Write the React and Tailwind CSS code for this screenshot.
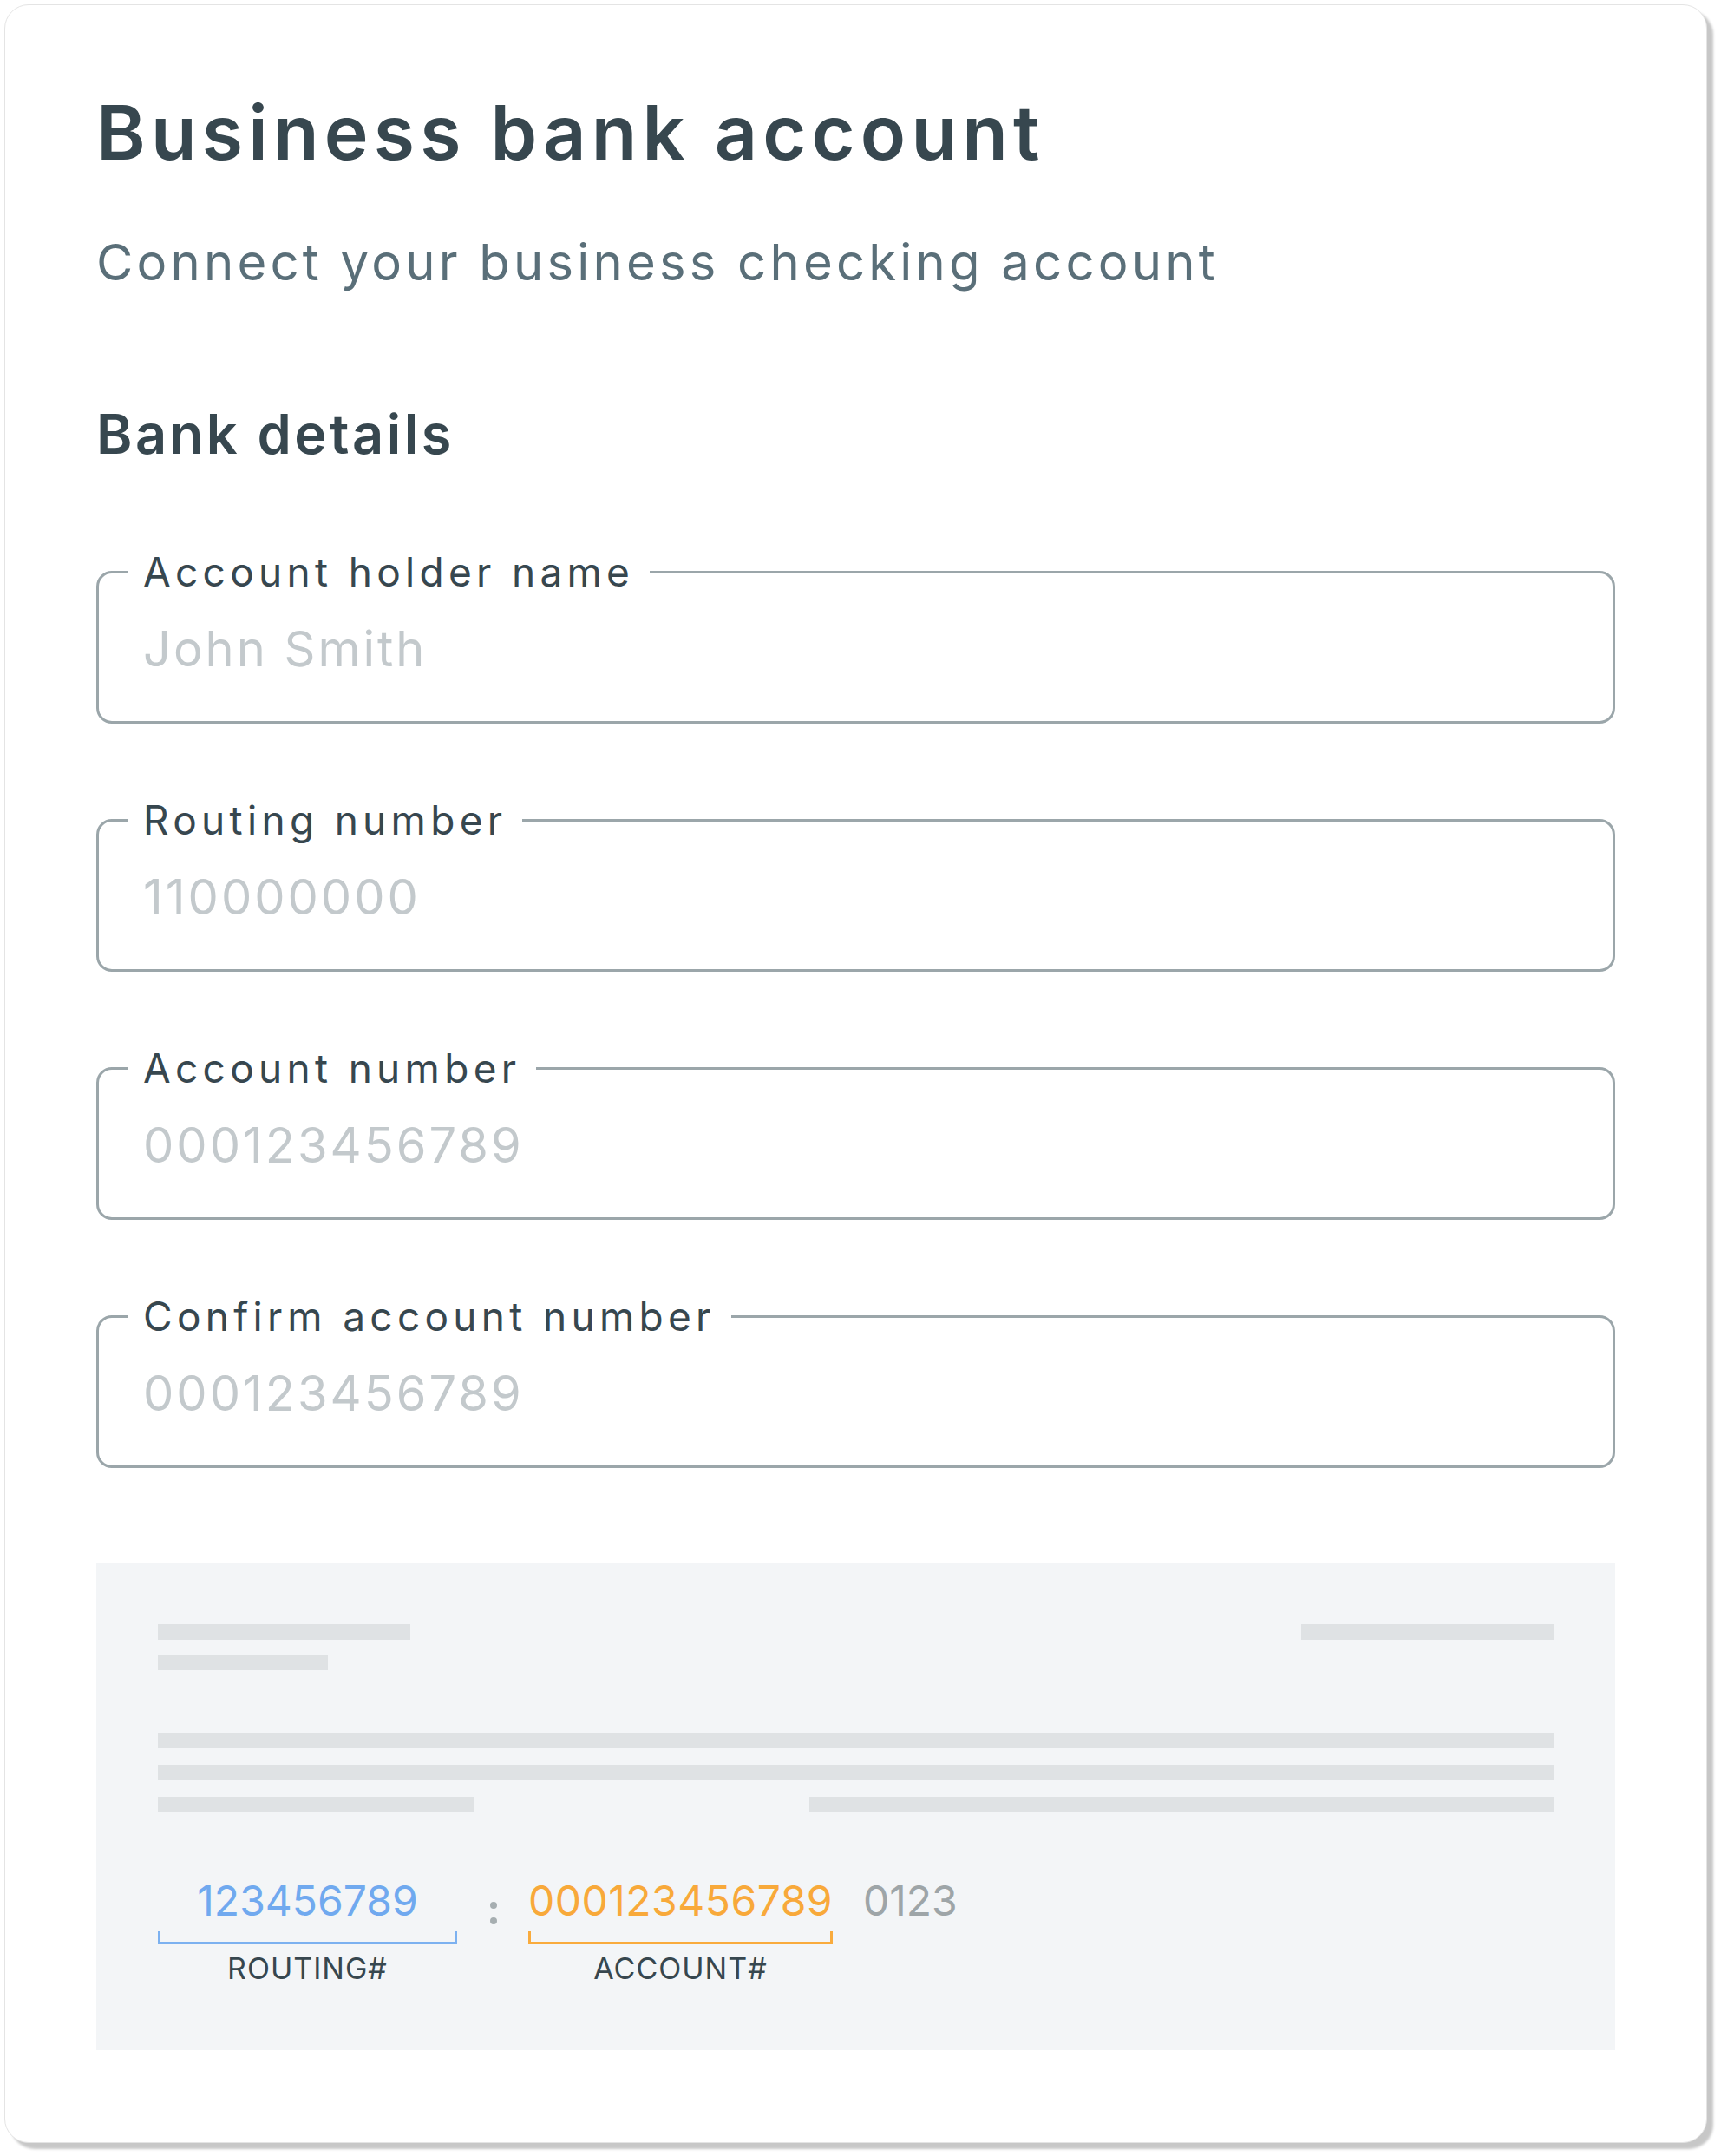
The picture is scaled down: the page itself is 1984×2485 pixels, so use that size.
import React from "react";

const font = { fontFamily: "Inter, 'Noto Sans', sans-serif" };

function Field({ label, placeholder }) {
  return (
    <div className="relative h-[176px] rounded-[18px] border-[3px] border-[#9ba6aa]">
      <span className="absolute left-[33px] top-[-2px] -translate-y-1/2 whitespace-nowrap bg-white px-[18px] text-[46px] leading-none tracking-[5.3px] text-[#37474f]">
        {label}
      </span>
      <input
        readOnly
        placeholder={placeholder}
        className="absolute left-[51px] right-[20px] top-[53px] bg-transparent text-[56px] leading-none tracking-[3px] text-[#37474f] outline-none placeholder:text-[#c3c9cc]"
        style={font}
      />
    </div>
  );
}

function Bar({ className }) {
  return <div className={`h-[18px] bg-[#dfe2e4] ${className}`} />;
}

export default function App() {
  return (
    <div className="min-h-screen bg-white p-[5px]" style={font}>
      <div className="w-[1963px] rounded-[28px] border border-[#e4e4e4] bg-white px-[105px] pb-[106px] pt-[104px] shadow-[7px_7px_3px_rgba(0,0,0,0.22)]">
        <h1 className="whitespace-nowrap text-[86px] font-semibold leading-none tracking-[6.2px] text-[#37474f]">
          Business bank account
        </h1>
        <p className="mt-[77px] whitespace-nowrap text-[58px] leading-none tracking-[4.2px] text-[#5a6f79]">
          Connect your business checking account
        </p>
        <h2 className="mt-[138px] text-[63px] font-semibold leading-none tracking-[3.5px] text-[#37474f]">
          Bank details
        </h2>
        <div className="mt-[126px] flex flex-col gap-[110px]">
          <Field label="Account holder name" placeholder="John Smith" />
          <Field label="Routing number" placeholder="110000000" />
          <Field label="Account number" placeholder="000123456789" />
          <Field label="Confirm account number" placeholder="000123456789" />
        </div>
        <div className="mt-[109px] h-[562px] bg-[#f3f5f7] px-[71px] pt-[71px]">
          <div className="flex justify-between">
            <div className="flex flex-col gap-[17px]">
              <Bar className="w-[291px]" />
              <Bar className="w-[196px]" />
            </div>
            <Bar className="w-[291px]" />
          </div>
          <div className="mt-[72px] flex flex-col gap-[19px]">
            <Bar className="w-full" />
            <Bar className="w-full" />
            <div className="flex justify-between">
              <Bar className="w-[364px]" />
              <Bar className="w-[858px]" />
            </div>
          </div>
          <div className="mt-[78px] flex items-start">
            <div className="flex w-[345px] flex-col items-center">
              <span className="text-[48px] leading-none text-[#70a9ef]">123456789</span>
              <div className="mt-[11px] h-[15px] w-full border-x-[3px] border-b-[3px] border-[#7cb1f0]" />
              <span className="mt-[11px] text-[34px] leading-none tracking-[1px] text-[#37474f]">ROUTING#</span>
            </div>
            <div className="ml-[38px] flex flex-col gap-[10px] pt-[25px]">
              <div className="h-[8px] w-[8px] rounded-full bg-[#a6aeb1]" />
              <div className="h-[8px] w-[8px] rounded-full bg-[#a6aeb1]" />
            </div>
            <div className="ml-[36px] flex w-[351px] flex-col items-center">
              <span className="text-[48px] leading-none tracking-[0.5px] text-[#f8a93a]">000123456789</span>
              <div className="mt-[11px] h-[15px] w-full border-x-[3px] border-b-[3px] border-[#f9ab3d]" />
              <span className="mt-[11px] text-[34px] leading-none tracking-[1px] text-[#37474f]">ACCOUNT#</span>
            </div>
            <span className="ml-[35px] text-[48px] leading-none text-[#9ea5a8]">0123</span>
          </div>
        </div>
      </div>
    </div>
  );
}
